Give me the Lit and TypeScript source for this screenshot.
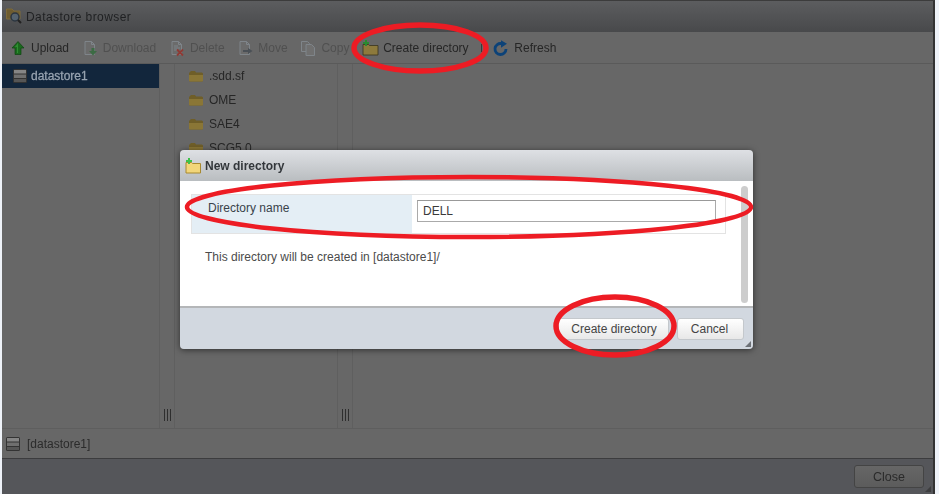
import { LitElement, html, css, svg } from 'lit';
import { customElement } from 'lit/decorators.js';

const folder = svg`<path d="M2 4 3 3H7L8 4.500H14L15 5.500V13L14 13.500H2L1 13V5z" fill="#6f5e28"/><path d="M1 7H15V13L14 13.500H2L1 13z" fill="#8a7636"/>`;

const disk = svg`<rect x="1" y="1" width="14" height="14" rx="1.500" fill="#333"/><rect x="2" y="2" width="12" height="3.500" fill="#858585"/><rect x="2" y="6.500" width="12" height="3.500" fill="#6f6f6f"/><rect x="2" y="11" width="12" height="3" fill="#565656"/>`;

const doc = svg`<path d="M3 1.500H9.500L12.500 4.500V14.500H3z" fill="#6b6b6b" stroke="#7f858a"/><path d="M9.500 1.500V4.500H12.500" fill="none" stroke="#7f858a"/>`;

const lines = svg`<path d="M5 6H9M5 8H11M5 10H9" stroke="#7f858a"/>`;

const icons: Record<string, unknown> = {
  upload: svg`<path d="M8 1.500 14 8H11V14.500H5V8H2z" fill="#1a6a1d" stroke="#0e4411" stroke-width=".7"/><path d="M8 3 5 7H7V13H8z" fill="#2f8f33"/>`,
  download: svg`${doc}<path d="M9.500 8H12.500V11H15L11 15.500 7 11H9.500z" fill="#3c6b44"/>`,
  delete: svg`${doc}${lines}<path d="M8 9.500 14 15.500M14 9.500 8 15.500" stroke="#8f3a34" stroke-width="1.800"/>`,
  move: svg`${doc}<path d="M6 10H11V8L15.500 11 11 14V12H6z" fill="#4a5056"/>`,
  copy: svg`<path d="M1.500 1.500H7.500L9.500 3.500V11.500H1.500z" fill="#6b6b6b" stroke="#7f858a"/><path d="M6 4.500H11.500L14.500 7.500V15.500H6z" fill="#707070" stroke="#7f858a"/>`,
  create: svg`<path d="M1 4.500H6.500L7.500 5.500H16V15H1z" fill="#8d7a3c" stroke="#38331e" stroke-width=".8"/><path d="M3 0H5V2H7V4H5V6H3V4H1V2H3z" fill="#2a8a30"/>`,
  refresh: svg`<path d="M13 9A5.500 5.500 0 1 1 8.500 3.600" fill="none" stroke="#0c4278" stroke-width="2.800"/><path d="M8 .3 14 3.800 8 7.800z" fill="#0c4278"/>`,
};

const tools = [
  { icon: 'upload', label: 'Upload', off: false },
  { icon: 'download', label: 'Download', off: true },
  { icon: 'delete', label: 'Delete', off: true },
  { icon: 'move', label: 'Move', off: true },
  { icon: 'copy', label: 'Copy', off: true },
  { icon: 'create', label: 'Create directory', off: false, sep: true },
  { icon: 'refresh', label: 'Refresh', off: false },
];

@customElement('app-root')
export class AppRoot extends LitElement {
  static styles = css`
    :host {
      display: block;
      position: relative;
      width: 939px;
      height: 494px;
      overflow: hidden;
      background: #eef2f8;
      font-family: 'Liberation Sans', Arial, sans-serif;
      font-size: 12px;
      color: #2a2a2a;
    }
    svg {
      overflow: visible;
    }
    .window {
      height: 494px;
      margin: 0 4px 0 2px;
      border-top: 1px solid #3c3c3c;
      border-right: 2px solid #333;
      box-sizing: border-box;
      display: flex;
      flex-direction: column;
      background: #676767;
      filter: blur(0.35px);
    }
    .title {
      height: 31px;
      display: flex;
      align-items: center;
      gap: 4px;
      padding-left: 4px;
      background: linear-gradient(#5c5d5f, #48494b);
      color: #1f2022;
      letter-spacing: 0.42px;
    }
    .toolbar {
      height: 31px;
      display: flex;
      align-items: center;
      padding-left: 8px;
      border-bottom: 1px solid #5a5a5a;
    }
    .tool {
      display: flex;
      align-items: center;
      gap: 5px;
      margin-right: 12.750px;
      color: #262626;
    }
    .tool.off {
      color: #505050;
    }
    .tool-sep {
      width: 1px;
      height: 8px;
      margin-right: 11px;
      background: #3a3a3a;
    }
    .panes {
      flex: 1;
      display: grid;
      grid-template-columns: 157px 16px 162px 16px 1fr;
      border-bottom: 1px solid #5e5e5e;
    }
    .selected {
      height: 24px;
      display: flex;
      align-items: center;
      gap: 3px;
      padding-left: 10px;
      background: #12263c;
      color: #97a3b0;
      -webkit-text-stroke: 0.3px #97a3b0;
    }
    .splitter {
      display: flex;
      align-items: flex-end;
      justify-content: center;
      padding-bottom: 7px;
      border-left: 1px solid #5f5f5f;
      border-right: 1px solid #5f5f5f;
    }
    .grip {
      width: 7px;
      height: 12px;
      background: repeating-linear-gradient(90deg, #2e2e2e 0 1px, #676767 1px 3px);
    }
    .file {
      height: 24px;
      display: flex;
      align-items: center;
      gap: 5px;
      padding-left: 13px;
      color: #262626;
    }
    .status {
      height: 29px;
      display: flex;
      align-items: center;
      gap: 6px;
      padding-left: 3px;
      color: #2b2b2b;
      border-bottom: 1px solid #3c3c3e;
    }
    .footer {
      height: 35px;
      position: relative;
      display: flex;
      align-items: center;
      justify-content: flex-end;
      padding-right: 9px;
      background: #55565a;
    }
    .close {
      width: 68px;
      height: 21px;
      display: flex;
      align-items: center;
      justify-content: center;
      border: 1px solid #444;
      border-radius: 3px;
      background: linear-gradient(#666, #5c5c5c);
      color: #2a2a2a;
      font-size: 12.500px;
    }
    .resize {
      position: absolute;
      right: 2px;
      bottom: 2px;
      width: 6px;
      height: 6px;
    }
    .dialog {
      position: absolute;
      left: 180px;
      top: 150px;
      width: 573px;
      height: 199px;
      display: flex;
      flex-direction: column;
      border-radius: 4px;
      overflow: hidden;
      box-shadow: 0 1px 6px rgba(0, 0, 0, 0.55);
      filter: blur(0.3px);
    }
    .dialog-title {
      height: 31px;
      display: flex;
      align-items: center;
      gap: 4px;
      padding-left: 5px;
      background: linear-gradient(#dee0e4, #b9bdc0);
      font-weight: bold;
      color: #33373b;
    }
    .dialog-body {
      flex: 1;
      position: relative;
      padding: 13px 27px 0 11px;
      background: #fff;
      border-bottom: 2px solid #b4b6b8;
    }
    .scrollbar {
      position: absolute;
      right: 5px;
      top: 5px;
      width: 7px;
      height: 117px;
      border-radius: 4px;
      background: #cdcdcd;
    }
    .field {
      height: 40px;
      display: grid;
      grid-template-columns: 220px 1fr;
      border: 1px solid #e3e3e3;
      box-sizing: border-box;
    }
    .field-label {
      padding: 6px 0 0 16px;
      background: #e4eef5;
      color: #39424a;
    }
    .field-value {
      padding: 5px 9px 0 5px;
    }
    .input {
      height: 22px;
      box-sizing: border-box;
      display: flex;
      align-items: center;
      padding-left: 5px;
      border: 1px solid #aaa;
      border-top-color: #999;
      color: #3a3a3a;
    }
    .hint {
      margin: 16px 0 0 14px;
      color: #4b4b4b;
    }
    .dialog-footer {
      height: 41px;
      position: relative;
      display: flex;
      align-items: center;
      justify-content: flex-end;
      gap: 8px;
      padding-right: 9px;
      background: #d2d8e0;
    }
    .btn {
      height: 22px;
      display: flex;
      align-items: center;
      justify-content: center;
      border: 1px solid #c4c8cc;
      border-radius: 3px;
      box-sizing: border-box;
      background: linear-gradient(#fff, #e8e8e8);
      color: #444;
    }
    .btn.create {
      width: 111px;
      padding-left: 1px;
    }
    .btn.cancel {
      width: 67px;
      padding-right: 2px;
    }
    .marks {
      position: absolute;
      inset: 0;
      pointer-events: none;
    }
    .marks ellipse {
      fill: none;
      stroke: #ed1c24;
      stroke-width: 4.500;
    }
    .marks ellipse.heavy {
      stroke-width: 5.500;
    }
  `;

  private glyph(body: unknown) {
    return html`<svg width="16" height="16" viewBox="0 0 16 16">${body}</svg>`;
  }

  render() {
    return html`
      <div class="window">
        <div class="title">
          ${this.glyph(svg`<path d="M.5 0H6L8 2H14V10H.5z" fill="#6e5c30" stroke="#7d6a3a"/><circle cx="9" cy="8" r="4" fill="#55636f" stroke="#2c3640" stroke-width="1.500"/><path d="M12 11 15 14" stroke="#222" stroke-width="2"/>`)}
          <span>Datastore browser</span>
        </div>
        <div class="toolbar">
          ${tools.map(
            (t) => html`<div class="tool ${t.off ? 'off' : ''}">${this.glyph(icons[t.icon])}<span>${t.label}</span></div>
              ${t.sep ? html`<div class="tool-sep"></div>` : ''}`
          )}
        </div>
        <div class="panes">
          <div><div class="selected">${this.glyph(disk)}<span>datastore1</span></div></div>
          <div class="splitter"><div class="grip"></div></div>
          <div>
            ${['.sdd.sf', 'OME', 'SAE4', 'SCG5.0'].map(
              (f) => html`<div class="file">${this.glyph(folder)}<span>${f}</span></div>`
            )}
          </div>
          <div class="splitter"><div class="grip"></div></div>
          <div></div>
        </div>
        <div class="status">${this.glyph(disk)}<span>[datastore1]</span></div>
        <div class="footer">
          <div class="close">Close</div>
          <svg class="resize" viewBox="0 0 6 6"><path d="M6 0V6H0z" fill="#3d3d3f"/></svg>
        </div>
      </div>

      <div class="dialog">
        <div class="dialog-title">
          ${this.glyph(svg`<path d="M1 4.500H6.500L7.500 5.500H15.500V15H1z" fill="#f2d67a" stroke="#a88a30"/><path d="M3 0H5V2H7V4H5V6H3V4H1V2H3z" fill="#3fc24a"/>`)}
          <span>New directory</span>
        </div>
        <div class="dialog-body">
          <div class="scrollbar"></div>
          <div class="field">
            <div class="field-label">Directory name</div>
            <div class="field-value"><div class="input">DELL</div></div>
          </div>
          <div class="hint">This directory will be created in [datastore1]/</div>
        </div>
        <div class="dialog-footer">
          <div class="btn create">Create directory</div>
          <div class="btn cancel">Cancel</div>
          <svg class="resize" viewBox="0 0 6 6"><path d="M6 0V6H0z" fill="#6d7177"/></svg>
        </div>
      </div>

      <svg class="marks" width="939" height="494" viewBox="0 0 939 494">
        <ellipse class="heavy" cx="420" cy="48" rx="66" ry="23"></ellipse>
        <ellipse cx="469" cy="207" rx="282" ry="30"></ellipse>
        <ellipse class="heavy" cx="615" cy="326" rx="59" ry="29"></ellipse>
      </svg>
    `;
  }
}
